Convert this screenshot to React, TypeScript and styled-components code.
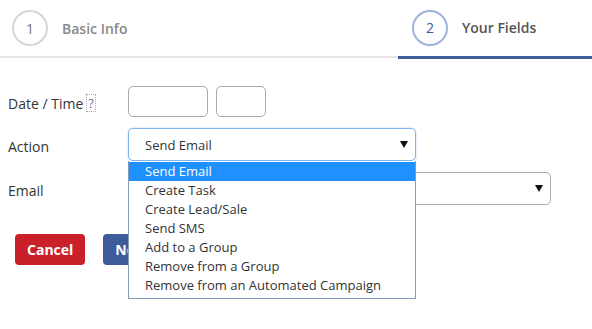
import React from "react";
import styled, { createGlobalStyle } from "styled-components";

const GlobalStyle = createGlobalStyle`
  body {
    margin: 0;
    background: #fff;
    font-family: "Open Sans", "Liberation Sans", sans-serif;
    color: #333;
  }
`;

const Page = styled.div`
  width: 592px;
  height: 329px;
  overflow: hidden;
`;

const Steps = styled.div`
  display: flex;
  height: 56px;
  border-bottom: 2px solid #e6e6e6;
`;

const Step = styled.div<{ $active?: boolean; $width?: number }>`
  display: flex;
  align-items: center;
  gap: 14px;
  padding-left: ${({ $active }) => ($active ? "14px" : "12px")};
  flex: ${({ $width }) => ($width ? `0 0 ${$width}px` : "1")};
  box-sizing: border-box;
  height: ${({ $active }) => ($active ? "59px" : "56px")};
  border-bottom: ${({ $active }) => ($active ? "3px solid #3e5b9a" : "none")};
  padding-bottom: ${({ $active }) => ($active ? "1px" : "0")};
`;

const Circle = styled.div<{ $active?: boolean }>`
  width: 32px;
  height: 32px;
  border-radius: 50%;
  border: 2px solid ${({ $active }) => ($active ? "#9fb1dd" : "#d6d6d6")};
  display: flex;
  align-items: center;
  justify-content: center;
  font-size: 14px;
  color: ${({ $active }) => ($active ? "#3e5b9a" : "#777")};
`;

const StepTitle = styled.div<{ $active?: boolean }>`
  font-size: 14px;
  font-weight: 600;
  color: ${({ $active }) => ($active ? "#555" : "#888")};
`;

const Form = styled.div`
  padding: 28px 0 0 8px;
  display: flex;
  flex-direction: column;
  gap: 11px;
`;

const Row = styled.div`
  display: grid;
  grid-template-columns: 120px auto;
  align-items: center;
`;

const Label = styled.div`
  font-size: 14px;
  color: #333;
  display: flex;
  align-items: center;
  gap: 3px;
  padding-top: 3px;
`;

const Help = styled.span`
  font-size: 13px;
  color: #6b7aa8;
  border: 1px dotted #aaa;
  line-height: 16px;
  padding: 0 1px;
`;

const Controls = styled.div`
  display: flex;
  gap: 8px;
  position: relative;
`;

const TextBox = styled.div<{ $width: number }>`
  width: ${({ $width }) => $width}px;
  height: 31px;
  box-sizing: border-box;
  border: 1px solid #aaa;
  border-radius: 5px;
`;

const Select = styled.div<{ $width: number; $focused?: boolean }>`
  width: ${({ $width }) => $width}px;
  height: 33px;
  box-sizing: border-box;
  border: 1px solid ${({ $focused }) => ($focused ? "#7fb4ec" : "#aaa")};
  box-shadow: ${({ $focused }) => ($focused ? "0 0 2px rgba(102,175,233,0.6)" : "none")};
  border-radius: 5px;
  display: flex;
  align-items: center;
  justify-content: space-between;
  padding: 0 7px 0 16px;
  font-size: 13px;
  color: #333;
`;

const Arrow = styled.span`
  width: 0;
  height: 0;
  border-left: 4px solid transparent;
  border-right: 4px solid transparent;
  border-top: 7px solid #111;
`;

const Menu = styled.ul`
  position: absolute;
  left: 0;
  top: 33px;
  width: 288px;
  box-sizing: border-box;
  margin: 0;
  padding: 1px 0 3px;
  list-style: none;
  background: #fff;
  border: 1px solid #7f9db9;
  border-top: none;
  z-index: 2;
`;

const Option = styled.li<{ $selected?: boolean }>`
  height: 19px;
  line-height: 19px;
  padding-left: 16px;
  font-size: 13px;
  background: ${({ $selected }) => ($selected ? "#1e90ff" : "transparent")};
  color: ${({ $selected }) => ($selected ? "#fff" : "#333")};
`;

const Buttons = styled.div`
  display: flex;
  gap: 18px;
  padding: 29px 0 0 15px;
`;

const Button = styled.button<{ $color: string }>`
  height: 31px;
  padding: 0 12px;
  border: none;
  border-radius: 4px;
  background: ${({ $color }) => $color};
  color: #fff;
  font-family: "Open Sans", "Liberation Sans", sans-serif;
  font-size: 14px;
  font-weight: 700;
`;

const actions = [
  "Send Email",
  "Create Task",
  "Create Lead/Sale",
  "Send SMS",
  "Add to a Group",
  "Remove from a Group",
  "Remove from an Automated Campaign",
];

export default function App() {
  return (
    <Page>
      <GlobalStyle />
      <Steps>
        <Step>
          <Circle>1</Circle>
          <StepTitle>Basic Info</StepTitle>
        </Step>
        <Step $active $width={194}>
          <Circle $active>2</Circle>
          <StepTitle $active>Your Fields</StepTitle>
        </Step>
      </Steps>
      <Form>
        <Row>
          <Label>
            Date / Time <Help>?</Help>
          </Label>
          <Controls>
            <TextBox $width={80} />
            <TextBox $width={50} />
          </Controls>
        </Row>
        <Row>
          <Label>Action</Label>
          <Controls>
            <Select $width={288} $focused>
              Send Email
              <Arrow />
            </Select>
            <Menu>
              {actions.map((a, i) => (
                <Option key={a} $selected={i === 0}>
                  {a}
                </Option>
              ))}
            </Menu>
          </Controls>
        </Row>
        <Row>
          <Label>Email</Label>
          <Controls>
            <Select $width={423}>
              <span />
              <Arrow />
            </Select>
          </Controls>
        </Row>
      </Form>
      <Buttons>
        <Button $color="#c9202a">Cancel</Button>
        <Button $color="#3e5b9a">Next</Button>
      </Buttons>
    </Page>
  );
}
